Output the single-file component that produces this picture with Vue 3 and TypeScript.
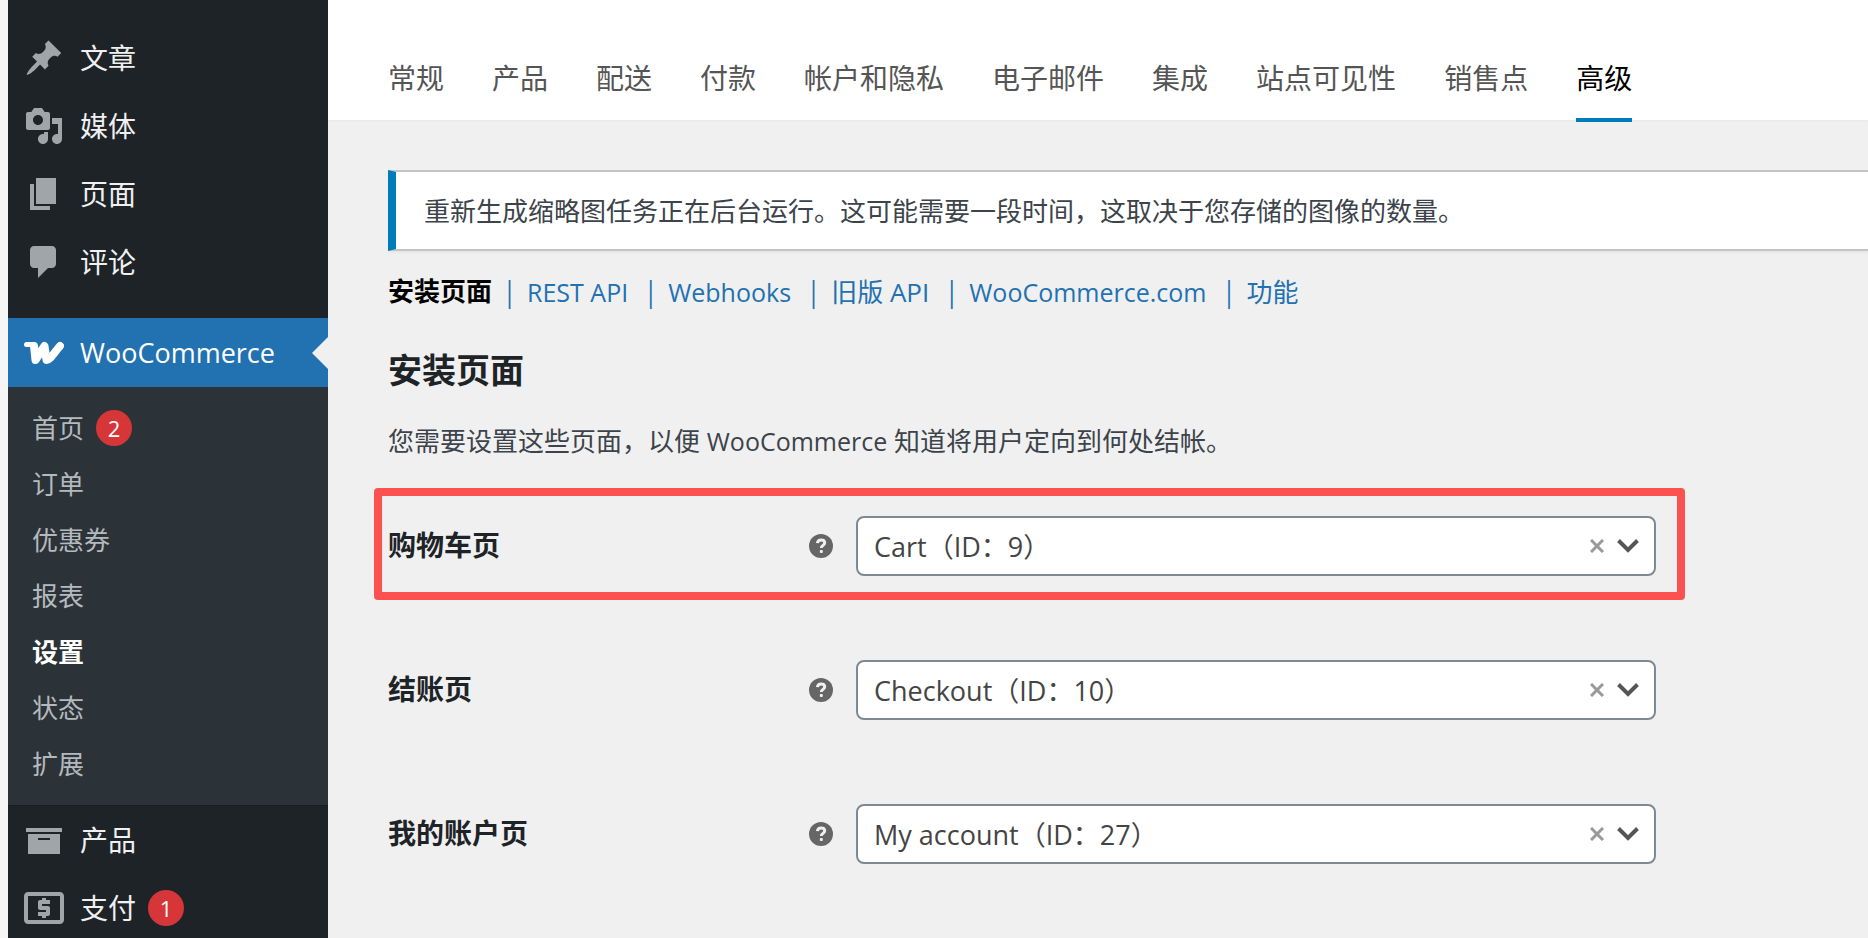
<script setup lang="ts">
import { ref } from 'vue'

interface MenuItem {
  label: string
  viewBox: string
  path: string
  badge?: number
}

interface PageField {
  id: string
  label: string
  options: string[]
  value: string
  highlighted: boolean
}

const topMenu: MenuItem[] = [
  {
    label: '文章',
    viewBox: '0 0 20 20',
    path: 'M10.44 3.02l1.82-1.82 6.36 6.35-1.83 1.82c-1.05-.68-2.48-.57-3.41.36l-.75.75c-.92.93-1.04 2.35-.35 3.41l-1.83 1.82-2.41-2.41-2.8 2.79c-.42.42-3.38 2.71-3.8 2.29s1.86-3.39 2.28-3.81l2.79-2.79L4.1 9.36l1.83-1.82c1.05.69 2.48.57 3.4-.36l.75-.75c.93-.92 1.05-2.35.36-3.41z',
  },
  {
    label: '媒体',
    viewBox: '0 0 20 20',
    path: 'M13 11V4c0-.55-.45-1-1-1h-1.67L9 1H5L3.67 3H2c-.55 0-1 .45-1 1v7c0 .55.45 1 1 1h10c.55 0 1-.45 1-1zM7 4.5c1.38 0 2.5 1.12 2.5 2.5S8.38 9.5 7 9.5 4.5 8.38 4.5 7 5.62 4.5 7 4.5zM14 6h5v10.5c0 1.38-1.12 2.5-2.5 2.5S14 17.88 14 16.5s1.12-2.5 2.5-2.5c.17 0 .34.02.5.05V9h-3V6zm-4 8.05V13h2v3.5c0 1.38-1.12 2.5-2.5 2.5S7 17.88 7 16.5 8.12 14 9.5 14c.17 0 .34.02.5.05z',
  },
  {
    label: '页面',
    viewBox: '0 0 20 20',
    path: 'M6 15V2h10v13H6zm-1 1h8v2H3V5h2v11z',
  },
  {
    label: '评论',
    viewBox: '0 0 20 20',
    path: 'M5 2h9c1.1 0 2 .9 2 2v7c0 1.1-.9 2-2 2h-2l-5 5v-5H5c-1.1 0-2-.9-2-2V4c0-1.1.9-2 2-2z',
  },
]

const bottomMenu: MenuItem[] = [
  {
    label: '产品',
    viewBox: '0 0 20 20',
    path: 'M19 4v2H1V4h18zM2 7h16v10H2V7zm11 3V9H7v1h6z',
  },
  {
    label: '支付',
    viewBox: '2 2 20 20',
    path: 'M11 17h2v-1h1c.55 0 1-.45 1-1v-3c0-.55-.45-1-1-1h-3v-1h4V8h-2V7h-2v1h-1c-.55 0-1 .45-1 1v3c0 .55.45 1 1 1h3v1H9v2h2v1zm9-13H4c-1.11 0-1.99.89-1.99 2L2 18c0 1.11.89 2 2 2h16c1.11 0 2-.89 2-2V6c0-1.11-.89-2-2-2zm0 14H4V6h16v12z',
    badge: 1,
  },
]

const subMenu = [
  { label: '首页', badge: 2 },
  { label: '订单' },
  { label: '优惠券' },
  { label: '报表' },
  { label: '设置', current: true },
  { label: '状态' },
  { label: '扩展' },
]

const tabs = ['常规', '产品', '配送', '付款', '帐户和隐私', '电子邮件', '集成', '站点可见性', '销售点', '高级']
const activeTab = ref('高级')

const sections = [
  { label: '安装页面' },
  { label: 'REST API', latin: true },
  { label: 'Webhooks', latin: true },
  { label: '旧版 API' },
  { label: 'WooCommerce.com', latin: true },
  { label: '功能' },
]
const activeSection = ref('安装页面')

const pages = ['Cart（ID：9）', 'Checkout（ID：10）', 'My account（ID：27）']
const fields = ref<PageField[]>([
  { id: 'cart-page', label: '购物车页', options: pages, value: pages[0], highlighted: true },
  { id: 'checkout-page', label: '结账页', options: pages, value: pages[1], highlighted: false },
  { id: 'account-page', label: '我的账户页', options: pages, value: pages[2], highlighted: false },
])
</script>

<template>
  <div class="shell">
    <nav class="sidebar" aria-label="主菜单">
      <ul class="menu">
        <li v-for="item in topMenu" :key="item.label">
          <a href="#" class="menu-link">
            <svg class="menu-icon" :viewBox="item.viewBox" aria-hidden="true"><path :d="item.path" /></svg>
            <span>{{ item.label }}</span>
          </a>
        </li>
      </ul>

      <a href="#" class="menu-link current">
        <svg class="menu-icon" viewBox="0 0 40 40" aria-hidden="true">
          <path d="M2.500 11.500H9" class="woo woo-serif" />
          <path d="M10 13L11.500 27L20.500 13L22.500 27C26 27 30 20 36 13" class="woo" />
        </svg>
        <span>WooCommerce</span>
      </a>
      <ul class="submenu">
        <li v-for="item in subMenu" :key="item.label">
          <a href="#" class="submenu-link" :class="{ active: item.current }">
            <span>{{ item.label }}</span>
            <span v-if="item.badge" class="badge">{{ item.badge }}</span>
          </a>
        </li>
      </ul>

      <ul class="menu">
        <li v-for="item in bottomMenu" :key="item.label">
          <a href="#" class="menu-link">
            <svg class="menu-icon" :viewBox="item.viewBox" aria-hidden="true"><path :d="item.path" /></svg>
            <span>{{ item.label }}</span>
            <span v-if="item.badge" class="badge">{{ item.badge }}</span>
          </a>
        </li>
      </ul>
    </nav>

    <main class="content">
      <nav class="tabs" aria-label="设置">
        <a
          v-for="tab in tabs"
          :key="tab"
          href="#"
          class="tab"
          :class="{ active: tab === activeTab }"
          @click.prevent="activeTab = tab"
        >{{ tab }}</a>
      </nav>

      <div class="body">
        <div class="notice">重新生成缩略图任务正在后台运行。这可能需要一段时间，这取决于您存储的图像的数量。</div>

        <ul class="sections">
          <li v-for="section in sections" :key="section.label">
            <a
              href="#"
              :class="{ active: section.label === activeSection, latin: section.latin }"
              @click.prevent="activeSection = section.label"
            >{{ section.label }}</a>
          </li>
        </ul>

        <h2>安装页面</h2>
        <p class="description">您需要设置这些页面，以便 <span class="latin">WooCommerce</span> 知道将用户定向到何处结帐。</p>

        <form class="fields" @submit.prevent>
          <div v-for="field in fields" :key="field.id" class="field" :class="{ highlighted: field.highlighted }">
            <label :for="field.id">{{ field.label }}</label>
            <button type="button" class="help" aria-label="帮助">
              <svg viewBox="0 0 24 24" aria-hidden="true">
                <circle cx="12" cy="12" r="12" />
                <path d="M8.4 9.2C8.6 6.9 10.1 5.9 12.1 5.9c2.1 0 3.6 1.1 3.6 2.9 0 2.6-3.4 2.6-3.4 5.2" />
                <rect x="10.8" y="16" width="3" height="3" rx="1" />
              </svg>
            </button>
            <div class="select-wrap">
              <select :id="field.id" v-model="field.value">
                <option v-for="option in field.options" :key="option" :value="option">{{ option }}</option>
              </select>
              <div class="select-icons">
                <button type="button" class="clear" aria-label="清除" @click="field.value = ''">
                  <svg viewBox="0 0 14 14" aria-hidden="true"><path d="M1 1l12 12M13 1L1 13" /></svg>
                </button>
                <svg class="chevron" viewBox="0 0 22 14" aria-hidden="true"><path d="M1.500 1.500L11 11l9.500-9.500" /></svg>
              </div>
            </div>
          </div>
        </form>
      </div>
    </main>
  </div>
</template>

<style>
body {
  margin: 0;
  background: #f0f0f0;
}
</style>

<style scoped>
.shell {
  display: flex;
  height: 100vh;
  overflow: hidden;
  color: #3c434a;
  font-family: 'Open Sans', 'Noto Sans CJK SC', sans-serif;
  font-size: 26px;
  line-height: 36px;
}

ul {
  margin: 0;
  padding: 0;
  list-style: none;
}

a {
  text-decoration: none;
}

.latin {
  font-size: 25px;
}

.sidebar {
  flex: none;
  box-sizing: border-box;
  width: 328px;
  padding-top: 24px;
  border-left: 8px solid #f6f6f6;
  background: #1d2327;
}

.menu-link {
  display: flex;
  align-items: center;
  height: 68px;
  padding-left: 16px;
  color: #f0f0f1;
  font-size: 28px;
}

.menu-icon {
  width: 40px;
  height: 40px;
  margin-right: 16px;
  fill: #a0a5aa;
}

.menu-link.current {
  position: relative;
  height: 69px;
  margin-top: 22px;
  background: #2271b1;
  color: #fff;
  font-size: 27px;
}

.menu-link.current::after {
  content: '';
  position: absolute;
  top: 50%;
  right: 0;
  margin-top: -16px;
  border: 16px solid transparent;
  border-left-width: 0;
  border-right-color: #f0f0f0;
}

.woo {
  fill: none;
  stroke: #fff;
  stroke-width: 8;
  stroke-linecap: round;
  stroke-linejoin: round;
}

.woo-serif {
  stroke-width: 5;
}

.submenu {
  padding: 13px 0;
  border-bottom: 1px solid #1a1f23;
  background: #2c3338;
}

.submenu-link {
  display: flex;
  align-items: center;
  height: 56px;
  padding-left: 24px;
  color: #b4b9be;
}

.submenu-link.active {
  color: #fff;
  font-weight: 700;
}

.badge {
  width: 36px;
  margin-left: 12px;
  border-radius: 18px;
  background: #d63638;
  color: #fff;
  font-size: 22px;
  line-height: 36px;
  text-align: center;
}

.content {
  flex: 1;
  min-width: 0;
  background: #f0f0f0;
}

.tabs {
  display: flex;
  gap: 48px;
  height: 120px;
  padding-left: 60px;
  background: #fff;
  box-shadow: 0 1px 2px rgba(0, 0, 0, 0.04);
}

.tab {
  box-sizing: border-box;
  height: 122px;
  padding-top: 60px;
  border-bottom: 4px solid transparent;
  color: #555;
  font-size: 28px;
  white-space: nowrap;
}

.tab.active {
  border-bottom-color: #007cba;
  color: #000;
}

.body {
  padding: 50px 0 0 60px;
}

.notice {
  padding: 21px 28px 20px;
  border: 2px solid #c3c4c7;
  border-right: 0;
  border-left: 8px solid #007cba;
  background: #fff;
  box-shadow: 0 2px 2px rgba(0, 0, 0, 0.04);
}

.sections {
  display: flex;
  margin-top: 22px;
  color: #2271b1;
}

.sections li {
  height: 36px;
}

.sections li + li::before {
  content: '|';
  margin: 0 14px;
  font-family: 'Noto Sans CJK SC', sans-serif;
}

.sections a {
  margin-right: 5px;
  color: #2271b1;
}

.sections a.active {
  margin-right: 0;
  color: #000;
  font-weight: 700;
}

h2 {
  margin: 39px 0 0;
  color: #1d2327;
  font-size: 34px;
  line-height: 44px;
}

.description {
  margin: 31px 0 29px;
}

.fields {
  display: flex;
  flex-direction: column;
  gap: 32px;
}

.field {
  display: flex;
  align-items: center;
  box-sizing: border-box;
  height: 112px;
  width: 1311px;
  max-width: 100%;
  margin-left: -14px;
  padding: 4px 21px 0 6px;
  border: 8px solid transparent;
  border-radius: 4px;
}

.field.highlighted {
  border-color: #fb5151;
}

.field label {
  flex: 1;
  padding-bottom: 2px;
  color: #1d2327;
  font-size: 28px;
  font-weight: 700;
}

button {
  display: flex;
  padding: 0;
  border: 0;
  background: none;
  cursor: pointer;
}

.help {
  width: 24px;
  height: 24px;
  margin-right: 23px;
}

.help svg {
  width: 24px;
  height: 24px;
  fill: #666;
}

.help path {
  fill: none;
  stroke: #f0f0f0;
  stroke-width: 3;
}

.help rect {
  fill: #f0f0f0;
}

.select-wrap {
  position: relative;
  width: 800px;
}

select {
  display: block;
  box-sizing: border-box;
  width: 100%;
  height: 60px;
  padding: 0 88px 0 16px;
  border: 2px solid #7e8993;
  border-radius: 8px;
  appearance: none;
  background: #fff;
  color: #444;
  font-family: inherit;
  font-size: 27px;
}

.select-icons {
  position: absolute;
  top: 0;
  right: 17px;
  display: flex;
  align-items: center;
  gap: 13px;
  height: 100%;
  pointer-events: none;
}

.clear {
  pointer-events: auto;
}

.clear svg {
  width: 14px;
  height: 14px;
  fill: none;
  stroke: #999;
  stroke-width: 3;
}

.chevron {
  width: 22px;
  height: 14px;
  fill: none;
  stroke: #555;
  stroke-width: 4;
}
</style>
